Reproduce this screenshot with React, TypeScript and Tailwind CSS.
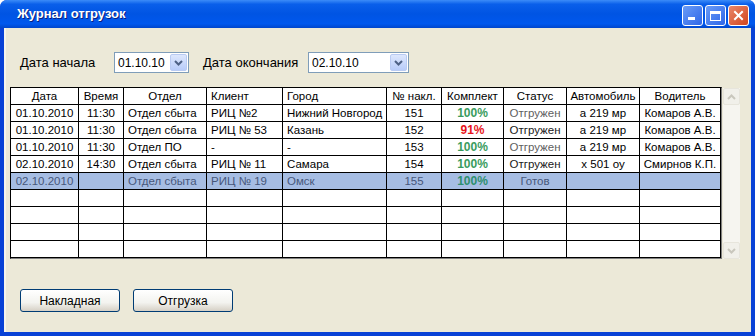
import React from 'react';

type Row = {
  date: string;
  time: string;
  dept: string;
  client: string;
  city: string;
  num: string;
  pct: string;
  pctOk: boolean;
  status: string;
  statusDim: boolean;
  car: string;
  driver: string;
  selected?: boolean;
};

const rows: Row[] = [
  { date: '01.10.2010', time: '11:30', dept: 'Отдел сбыта', client: 'РИЦ №2', city: 'Нижний Новгород', num: '151', pct: '100%', pctOk: true, status: 'Отгружен', statusDim: true, car: 'а 219 мр', driver: 'Комаров А.В.' },
  { date: '01.10.2010', time: '11:30', dept: 'Отдел сбыта', client: 'РИЦ № 53', city: 'Казань', num: '152', pct: '91%', pctOk: false, status: 'Отгружен', statusDim: false, car: 'а 219 мр', driver: 'Комаров А.В.' },
  { date: '01.10.2010', time: '11:30', dept: 'Отдел ПО', client: '-', city: '-', num: '153', pct: '100%', pctOk: true, status: 'Отгружен', statusDim: true, car: 'а 219 мр', driver: 'Комаров А.В.' },
  { date: '02.10.2010', time: '14:30', dept: 'Отдел сбыта', client: 'РИЦ № 11', city: 'Самара', num: '154', pct: '100%', pctOk: true, status: 'Отгружен', statusDim: false, car: 'х 501 оу', driver: 'Смирнов К.П.' },
  { date: '02.10.2010', time: '', dept: 'Отдел сбыта', client: 'РИЦ № 19', city: 'Омск', num: '155', pct: '100%', pctOk: true, status: 'Готов', statusDim: false, car: '', driver: '', selected: true },
];

const gridCols = 'grid grid-cols-[68px_45px_83px_76px_104px_55px_62px_63px_73px_81px]';
const cell = 'border-r border-b border-black h-[17px] leading-[16px] whitespace-nowrap overflow-hidden';

const Chevron: React.FC<{ up?: boolean; color: string }> = ({ up, color }) => (
  <svg width="9" height="6" viewBox="0 0 9 6">
    <path d={up ? 'M1 5 L4.5 1.5 L8 5' : 'M1 1 L4.5 4.5 L8 1'} stroke={color} strokeWidth="2" fill="none" />
  </svg>
);

const DateCombo: React.FC<{ value: string; width: string }> = ({ value, width }) => (
  <div className={`${width} h-[21px] bg-white border border-[#7F9DB9] flex items-center justify-between`}>
    <span className="pl-[3px] text-[12px] text-black">{value}</span>
    <div className="w-[17px] h-[17px] mr-[1px] rounded-[2px] border border-[#B9CBF3] bg-[linear-gradient(to_bottom,#DDE7FD,#B8CCF9)] flex items-center justify-center">
      <Chevron color="#4D6185" />
    </div>
  </div>
);

const XpButton: React.FC<{ label: string }> = ({ label }) => (
  <button className="w-[100px] h-[23px] rounded-[3px] border border-[#003C74] bg-[linear-gradient(to_bottom,#FFFFFF,#F3F3EF_60%,#D6D0C5)] text-[12px] text-black">
    {label}
  </button>
);

const App: React.FC = () => {
  return (
    <div className="w-[755px] h-[336px] bg-[#0841D6] flex flex-col rounded-t-[7px] overflow-hidden" style={{ fontFamily: '"Liberation Sans", Arial, sans-serif' }}>
      {/* title bar */}
      <div className="h-[28px] shrink-0 flex items-center justify-between pl-[17px] pr-[6px] bg-[linear-gradient(to_bottom,#3C8CF8_0%,#0A5FEA_15%,#0054E3_50%,#0058EE_85%,#0046CC_100%)]">
        <span className="text-white font-bold text-[13px] [text-shadow:1px_1px_0_#0A1F80]">Журнал отгрузок</span>
        <div className="flex gap-[2px] pt-[3px]">
          <div className="w-[21px] h-[21px] rounded-[3px] border border-white bg-[linear-gradient(135deg,#6A9CF7,#2E66E8)] flex items-end justify-start pl-[5px] pb-[5px]">
            <div className="w-[7px] h-[3px] bg-white" />
          </div>
          <div className="w-[21px] h-[21px] rounded-[3px] border border-white bg-[linear-gradient(135deg,#6A9CF7,#2E66E8)] flex items-center justify-center">
            <div className="w-[11px] h-[10px] border border-white border-t-[3px]" />
          </div>
          <div className="w-[21px] h-[21px] rounded-[3px] border border-white bg-[linear-gradient(135deg,#E9876A,#D2461E)] flex items-center justify-center">
            <svg width="11" height="11" viewBox="0 0 11 11">
              <path d="M2 2 L9 9 M9 2 L2 9" stroke="white" strokeWidth="2" strokeLinecap="square" />
            </svg>
          </div>
        </div>
      </div>

      {/* body */}
      <div className="flex-1 ml-[4px] mr-[4px] mb-[4px] bg-[#ECE9D8] border-l-2 border-[#F6F4EC] flex flex-col">
        <div className="flex items-center pl-[14px] pt-[24px] text-[13px] text-black">
          <span className="w-[94px]">Дата начала</span>
          <DateCombo value="01.10.10" width="w-[75px]" />
          <span className="ml-[14px] w-[105px]">Дата окончания</span>
          <DateCombo value="02.10.10" width="w-[101px]" />
        </div>

        <div className="flex pl-[4px] pt-[14px]">
          <div className="border-l border-t border-black border-r border-r-[#808080] border-b border-b-[#808080] text-[11.5px] text-black">
            <div className={`${gridCols} bg-white`}>
              <div className={`${cell} text-center`}>Дата</div>
              <div className={`${cell} text-center`}>Время</div>
              <div className={`${cell} text-center`}>Отдел</div>
              <div className={`${cell} pl-[4px]`}>Клиент</div>
              <div className={`${cell} pl-[4px]`}>Город</div>
              <div className={`${cell} text-center`}>№ накл.</div>
              <div className={`${cell} text-center`}>Комплект</div>
              <div className={`${cell} text-center`}>Статус</div>
              <div className={`${cell} text-center`}>Автомобиль</div>
              <div className={`${cell} text-center`}>Водитель</div>
            </div>
            {rows.map((r, i) => {
              const txt = r.selected ? 'text-[#46577A]' : 'text-black';
              return (
                <div key={i} className={`${gridCols} ${r.selected ? 'bg-[#A6BDE3]' : 'bg-white'} ${txt}`}>
                  <div className={`${cell} text-center`}>{r.date}</div>
                  <div className={`${cell} text-center`}>{r.time}</div>
                  <div className={`${cell} pl-[4px]`}>{r.dept}</div>
                  <div className={`${cell} pl-[4px]`}>{r.client}</div>
                  <div className={`${cell} pl-[4px]`}>{r.city}</div>
                  <div className={`${cell} text-center`}>{r.num}</div>
                  <div className={`${cell} text-center font-bold text-[12px] ${r.selected ? 'text-[#2E8F6E]' : r.pctOk ? 'text-[#3A9C5E]' : 'text-[#E8141B]'}`}>{r.pct}</div>
                  <div className={`${cell} text-center ${r.selected ? '' : r.statusDim ? 'text-[#606060]' : 'text-[#202020]'}`}>{r.status}</div>
                  <div className={`${cell} text-center`}>{r.car}</div>
                  <div className={`${cell} text-center`}>{r.driver}</div>
                </div>
              );
            })}
            {[0, 1, 2, 3].map((i) => (
              <div key={`e${i}`} className={`${gridCols} bg-white`}>
                {Array.from({ length: 10 }).map((_, j) => (
                  <div key={j} className={cell} />
                ))}
              </div>
            ))}
          </div>

          {/* scrollbar */}
          <div className="ml-[1px] mt-[1px] w-[17px] bg-[#F6F5F0] flex flex-col justify-between">
            <div className="w-[17px] h-[17px] rounded-[2px] border border-[#E7E5DC] bg-[#F1F0EA] flex items-center justify-center">
              <Chevron up color="#C9C7BD" />
            </div>
            <div className="w-[17px] h-[17px] rounded-[2px] border border-[#E7E5DC] bg-[#F1F0EA] flex items-center justify-center">
              <Chevron color="#C9C7BD" />
            </div>
          </div>
        </div>

        <div className="flex gap-[13px] pl-[14px] pt-[30px]">
          <XpButton label="Накладная" />
          <XpButton label="Отгрузка" />
        </div>
      </div>
    </div>
  );
};

export default App;
